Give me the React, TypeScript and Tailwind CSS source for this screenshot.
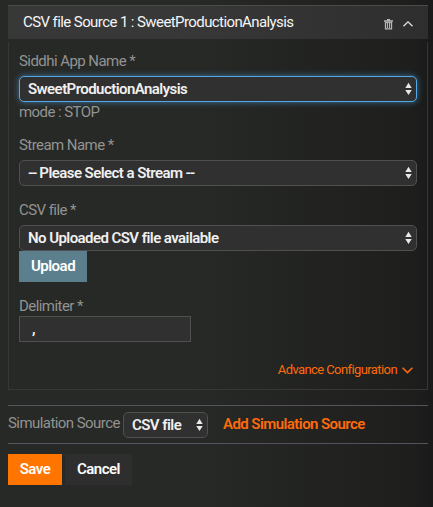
import type { ReactNode } from "react";

function SortArrows() {
  return (
    <svg width="7" height="14" viewBox="0 0 7 14" fill="#e8e8e8" className="shrink-0">
      <path d="M3.5 0.8 L6.7 6 H0.3 Z M0.3 8 H6.7 L3.5 13.1 Z" />
    </svg>
  );
}

function SelectBox({ children, focused = false }: { children: ReactNode; focused?: boolean }) {
  return (
    <div
      className={
        "flex h-[26px] items-center justify-between rounded-[5px] border bg-[#303030] pl-2 pr-1 text-[15px] font-semibold leading-[24px] tracking-[-0.56px] text-[#f0f0f0] " +
        (focused ? "border-[#55a7e6] shadow-[0_0_6px_rgba(82,168,236,0.6)]" : "border-[#505050]")
      }
    >
      <span>{children}</span>
      <SortArrows />
    </div>
  );
}

function Label({ children }: { children: ReactNode }) {
  return <div className="h-5 text-[15px] font-normal leading-5 tracking-[-0.56px] text-[#929392]">{children}</div>;
}

export default function App() {
  return (
    <div className="h-[507px] w-[433px] overflow-hidden whitespace-nowrap bg-linear-to-r from-[#272926] from-45% via-[#1e1f1d] via-95% to-[#191a19] pl-2 pr-[5px] pt-[5px] font-['Roboto','Liberation_Sans',sans-serif]">
      <header className="flex h-[34px] items-center justify-between border-t border-[#4a4b4a] bg-linear-to-r from-[#383838] from-40% to-[#2e2e2e] pl-[15px] pr-[15px]">
        <h1 className="pb-px text-[15px] font-normal leading-5 tracking-[-0.59px] text-[#f5f5f5]">CSV file Source 1 : SweetProductionAnalysis</h1>
        <div className="flex items-center gap-[10px] pt-[3px]">
          <svg width="9" height="11" viewBox="0 0 9 11" fill="none" stroke="#b7b7b7">
            <path d="M0 2 H9 M3 .6 H6" strokeWidth="1.4" />
            <path d="M1.5 2.5 V9.9 H7.5 V2.5" strokeWidth="1.3" />
            <path d="M1.5 3.6 H7.5 M3.5 4 V9 M5.5 4 V9" strokeWidth="1" />
          </svg>
          <svg width="10" height="6" viewBox="0 0 10 6" fill="none" stroke="#e0e0e0" strokeWidth="1.3">
            <path d="M.5 5.3 L5 .9 L9.5 5.3" />
          </svg>
        </div>
      </header>
      <main className="mt-[3px] h-[348px] border border-t-0 border-[#363736] px-[10px] pt-[9px]">
        <Label>Siddhi App Name *</Label>
        <div className="mt-[5px]"><SelectBox focused>SweetProductionAnalysis</SelectBox></div>
        <Label>mode : STOP</Label>
        <div className="mt-[13px]"><Label>Stream Name *</Label></div>
        <div className="mt-[5px]">
          <SelectBox>
            <span className="tracking-[-1.4px]">--</span> Please Select a Stream <span className="tracking-[-1.4px]">--</span>
          </SelectBox>
        </div>
        <div className="mt-[14px]"><Label>CSV file *</Label></div>
        <div className="mt-[5px]"><SelectBox>No Uploaded CSV file available</SelectBox></div>
        <button className="block h-[31px] w-[68px] bg-[#5b7f8c] text-[15px] font-semibold leading-[31px] tracking-[-0.5px] text-white">Upload</button>
        <div className="mt-[14px]"><Label>Delimiter *</Label></div>
        <div className="h-[26px] w-[172px] border border-[#505050] bg-[#303030] pl-[12px] text-[15px] font-semibold leading-[24px] text-[#f2f2f2]">,</div>
        <div className="mt-[18px] flex h-5 items-center justify-end gap-[5px] pr-1 text-[13px] leading-5 text-[#ff6a0c]">
          <span className="tracking-[-0.59px]">Advance Configuration</span>
          <svg width="11" height="7" viewBox="0 0 11 7" fill="none" stroke="currentColor" strokeWidth="1.6">
            <path d="M.6 .8 L5.5 5.6 L10.4 .8" />
          </svg>
        </div>
      </main>
      <section className="mt-[15px] flex h-[39px] border-y border-[#56515a] pt-[6px]">
        <div className="w-[115px] pt-px"><Label>Simulation Source</Label></div>
        <div className="w-[85px]"><SelectBox>CSV file</SelectBox></div>
        <span className="ml-[15px] pt-[2px] text-[15px] font-semibold leading-[21px] tracking-[-0.57px] text-[#ff6a0c]">Add Simulation Source</span>
      </section>
      <footer className="mt-[10px] flex gap-[3px] text-[15px] font-semibold leading-[31px] tracking-[-0.5px] text-white">
        <button className="h-[31px] w-[54px] bg-[#ff7500]">Save</button>
        <button className="h-[31px] w-[67px] bg-[#2e2e2e]">Cancel</button>
      </footer>
    </div>
  );
}
